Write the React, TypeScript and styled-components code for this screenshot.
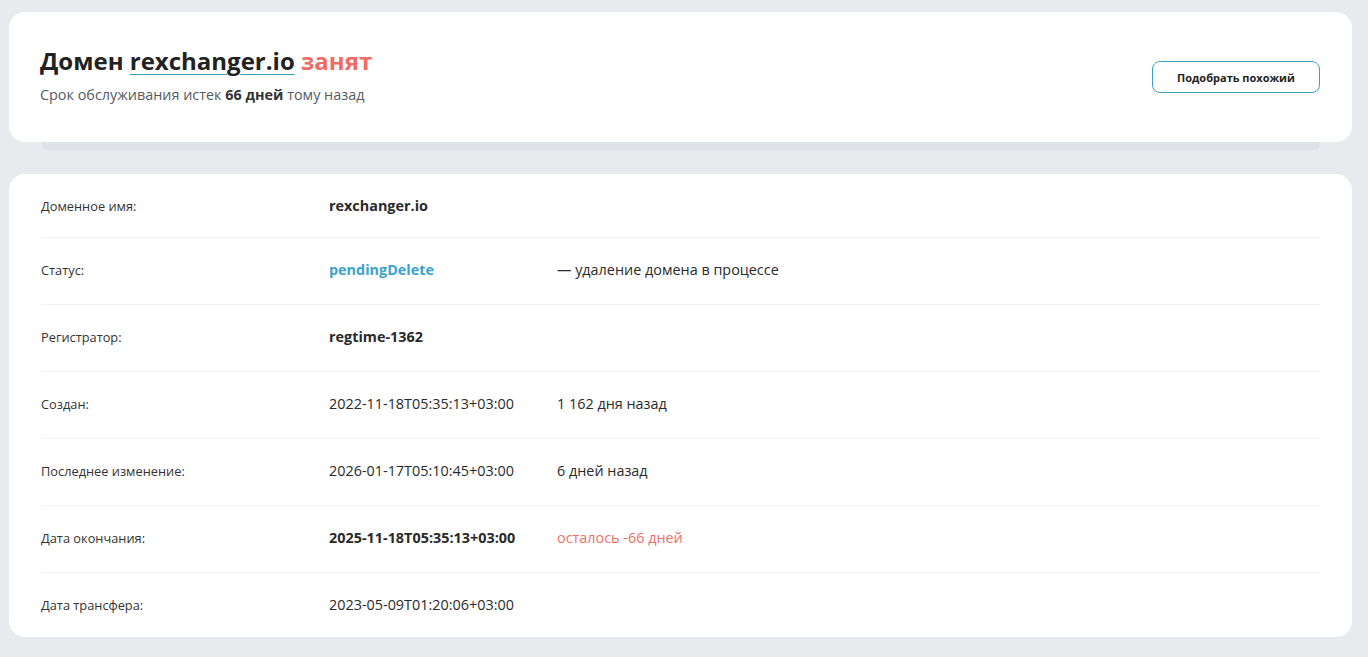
import React from "react";
import styled, { createGlobalStyle } from "styled-components";

const Global = createGlobalStyle`
  html, body { margin: 0; padding: 0; background: #e8ebee; }
  body { font-family: "Open Sans", "Noto Sans", sans-serif; color: #222; }
`;

const Page = styled.div`
  display: flex;
  flex-direction: column;
  gap: 32px;
  padding: 12px 16px 20px 9px;
`;

const HeadCard = styled.section`
  position: relative;
  background: #fff;
  border-radius: 16px;
  height: 130px;
  box-sizing: border-box;
  padding: 0 32px 0 31px;
  display: flex;
  align-items: center;
  justify-content: space-between;
  &::after {
    content: "";
    position: absolute;
    left: 33px;
    right: 32px;
    bottom: -8px;
    height: 8px;
    background: #dfe3e7;
    border-radius: 0 0 6px 6px;
  }
`;

const HeadText = styled.div`
  display: flex;
  flex-direction: column;
  gap: 7px;
  margin-top: -6px;
`;

const Title = styled.h1`
  margin: 0;
  font-size: 24px;
  font-weight: 700;
  line-height: 34px;
  color: #222;
`;

const DomainLink = styled.span`
  text-decoration: underline;
  text-decoration-color: #3aa3c4;
  text-decoration-thickness: 1px;
  text-underline-offset: 4px;
`;

const Busy = styled.span`
  color: #f06c65;
`;

const Sub = styled.p`
  margin: 0;
  font-size: 14.4px;
  line-height: 20px;
  color: #555b61;
  b { color: #333; font-weight: 700; }
`;

const Button = styled.button`
  font-family: inherit;
  font-size: 11px;
  font-weight: 700;
  color: #222;
  background: #fff;
  border: 1px solid #3aa0c2;
  border-radius: 8px;
  width: 168px;
  height: 32px;
  cursor: pointer;
`;

const InfoCard = styled.section`
  background: #fff;
  border-radius: 16px;
  padding: 0 32px;
`;

const Row = styled.div`
  display: grid;
  grid-template-columns: 288px 228px 1fr;
  align-items: center;
  line-height: 20px;
  padding: 22px 0 24px;
  & + & { border-top: 1px solid #f0f2f4; }
  &:first-child { padding: 22px 0 21px; }
  &:last-child { padding: 22px 0 22px; }
`;

const Label = styled.div`
  font-size: 12.8px;
  color: #333;
`;

const Value = styled.div<{ $bold?: boolean; $tone?: "link" | "bad" }>`
  font-size: 14.4px;
  font-weight: ${(p) => (p.$bold ? 700 : 400)};
  color: ${(p) => (p.$tone === "link" ? "#3aa3cc" : p.$tone === "bad" ? "#ec7068" : "#2a2a2a")};
`;

type R = { label: string; value: string; bold?: boolean; tone?: "link" | "bad"; extra?: string; extraTone?: "bad" };

const rows: R[] = [
  { label: "Доменное имя:", value: "rexchanger.io", bold: true },
  { label: "Статус:", value: "pendingDelete", bold: true, tone: "link", extra: "— удаление домена в процессе" },
  { label: "Регистратор:", value: "regtime-1362", bold: true },
  { label: "Создан:", value: "2022-11-18T05:35:13+03:00", extra: "1 162 дня назад" },
  { label: "Последнее изменение:", value: "2026-01-17T05:10:45+03:00", extra: "6 дней назад" },
  { label: "Дата окончания:", value: "2025-11-18T05:35:13+03:00", bold: true, extra: "осталось -66 дней", extraTone: "bad" },
  { label: "Дата трансфера:", value: "2023-05-09T01:20:06+03:00" },
];

export default function App() {
  return (
    <>
      <Global />
      <Page>
        <HeadCard>
          <HeadText>
            <Title>
              Домен <DomainLink>rexchanger.io</DomainLink> <Busy>занят</Busy>
            </Title>
            <Sub>
              Срок обслуживания истек <b>66 дней</b> тому назад
            </Sub>
          </HeadText>
          <Button>Подобрать похожий</Button>
        </HeadCard>
        <InfoCard>
          {rows.map((r) => (
            <Row key={r.label}>
              <Label>{r.label}</Label>
              <Value $bold={r.bold} $tone={r.tone}>{r.value}</Value>
              {r.extra ? <Value $tone={r.extraTone}>{r.extra}</Value> : <span />}
            </Row>
          ))}
        </InfoCard>
      </Page>
    </>
  );
}
